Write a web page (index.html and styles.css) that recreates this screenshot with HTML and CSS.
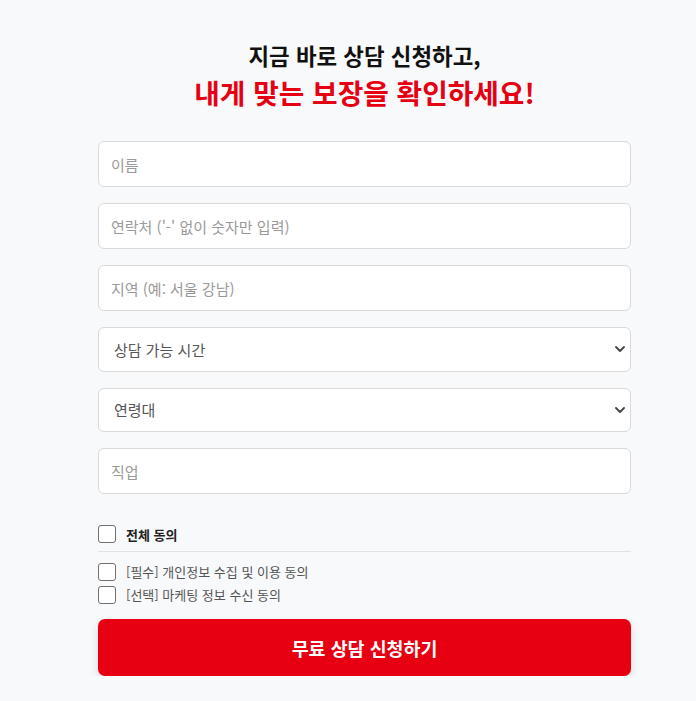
FILE: index.html
```html
<!DOCTYPE html>
<html lang="ko">
<head>
  <meta charset="UTF-8">
  <title>무료 상담 신청</title>
  <link rel="stylesheet" href="styles.css">
</head>
<body>
  <div class="wrap">
    <div class="heading">
      <p class="sub">지금 바로 상담 신청하고,</p>
      <h1>내게 맞는 보장을 확인하세요!</h1>
    </div>

    <form class="form">
      <input type="text" placeholder="이름">
      <input type="text" placeholder="연락처 ('-' 없이 숫자만 입력)">
      <input type="text" placeholder="지역 (예: 서울 강남)">
      <div class="select">
        <select>
          <option>상담 가능 시간</option>
        </select>
        <svg class="chev" width="10" height="6" viewBox="0 0 10 6"><path d="M1 1l4 4 4-4" fill="none" stroke="#444" stroke-width="1.8" stroke-linecap="round" stroke-linejoin="round"/></svg>
      </div>
      <div class="select">
        <select>
          <option>연령대</option>
        </select>
        <svg class="chev" width="10" height="6" viewBox="0 0 10 6"><path d="M1 1l4 4 4-4" fill="none" stroke="#444" stroke-width="1.8" stroke-linecap="round" stroke-linejoin="round"/></svg>
      </div>
      <input type="text" placeholder="직업">

      <div class="agree">
        <label class="check all"><input type="checkbox"><span>전체 동의</span></label>
        <label class="check"><input type="checkbox"><span>[필수] 개인정보 수집 및 이용 동의</span></label>
        <label class="check"><input type="checkbox"><span>[선택] 마케팅 정보 수신 동의</span></label>
      </div>

      <button type="button" class="submit">무료 상담 신청하기</button>
    </form>
  </div>
</body>
</html>
```

FILE: styles.css
```css
body {
  margin: 0;
  background: #f8f9fb;
  font-family: "Noto Sans CJK KR", "Noto Sans", sans-serif;
  color: #222;
}
.wrap {
  width: 533px;
  margin-left: 98px;
  padding-top: 38px;
}
.heading {
  text-align: center;
  margin-bottom: 30px;
}
.sub {
  margin: 0;
  font-size: 22.4px;
  font-weight: 700;
  line-height: 34px;
  color: #111;
}
h1 {
  margin: 1px 0 0;
  font-size: 27.8px;
  font-weight: 700;
  line-height: 38px;
  color: #e60012;
}
.form {
  display: flex;
  flex-direction: column;
  gap: 16px;
}
.form input[type="text"],
.select select {
  box-sizing: border-box;
  width: 100%;
  height: 46px;
  padding: 0 12px;
  border: 1px solid #d9d9d9;
  border-radius: 6px;
  background: #fff;
  font-family: inherit;
  font-size: 15px;
  color: #333;
  outline: none;
}
.form input::placeholder {
  color: #999;
}
.select {
  position: relative;
}
.select select {
  height: 44.5px;
  padding-left: 15px;
  color: #555;
  appearance: none;
  -webkit-appearance: none;
}
.chev {
  position: absolute;
  right: 6px;
  top: 50%;
  margin-top: -3px;
}
.agree {
  margin-top: 15px;
  display: flex;
  flex-direction: column;
}
.check {
  display: flex;
  align-items: center;
  gap: 10px;
  font-size: 13px;
  color: #555;
  height: 23px;
}
.check input {
  appearance: none;
  -webkit-appearance: none;
  margin: 0;
  width: 18px;
  height: 18px;
  border: 1px solid #707070;
  border-radius: 3px;
  background: #fff;
}
.check.all {
  font-weight: 700;
  color: #222;
  height: 18px;
  padding-bottom: 8px;
  margin-bottom: 8px;
  border-bottom: 1px solid #e2e2e2;
}
.submit {
  margin-top: -3px;
  height: 57px;
  border: none;
  border-radius: 7px;
  background: #e60012;
  color: #fff;
  font-family: inherit;
  font-size: 18.4px;
  font-weight: 700;
  box-shadow: 0 4px 10px rgba(0, 0, 0, 0.12);
}
```
